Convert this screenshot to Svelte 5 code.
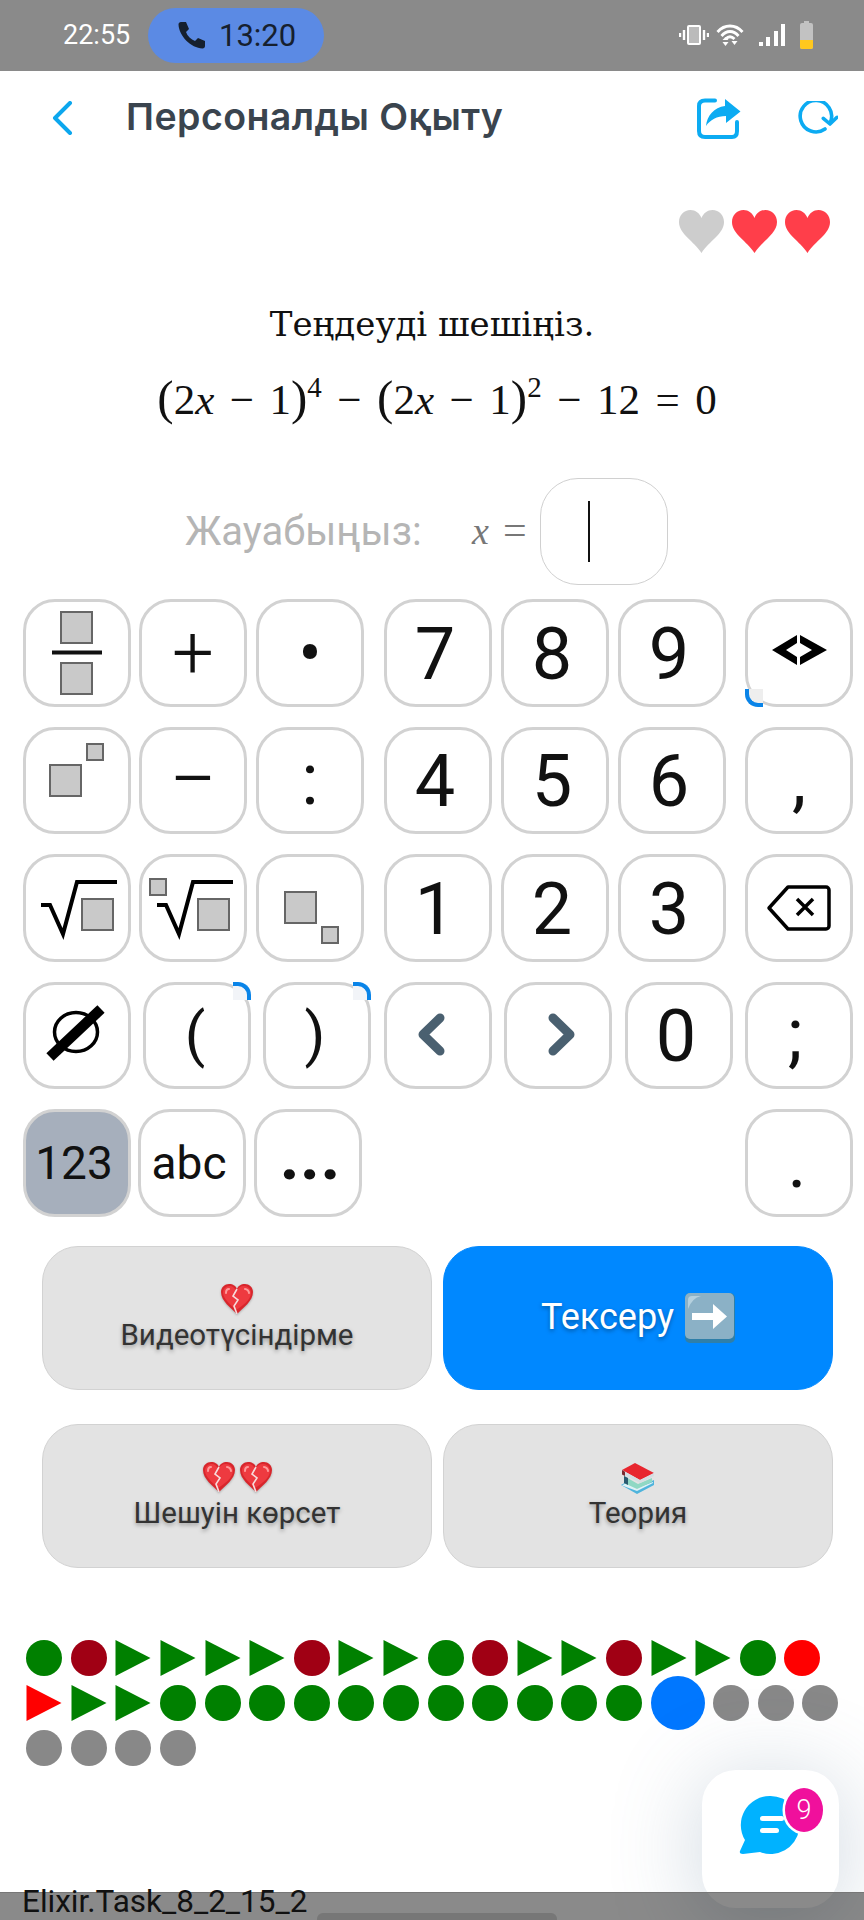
<script>
  const G = '#008000', D = '#a00014', R = '#ff0000', Y = '#888888';
  const prog = [
    ['c',G],['c',D],['t',G],['t',G],['t',G],['t',G],['c',D],['t',G],['t',G],['c',G],['c',D],['t',G],['t',G],['c',D],['t',G],['t',G],['c',G],['c',R],
    ['t',R],['t',G],['t',G],['c',G],['c',G],['c',G],['c',G],['c',G],['c',G],['c',G],['c',G],['c',G],['c',G],['c',G],['b','#0077ff'],['c',Y],['c',Y],['c',Y],
    ['c',Y],['c',Y],['c',Y],['c',Y]
  ];
  const rows = [
    [{ml:23,i:'frac'},{ml:8,t:'+',c:'op'},{ml:9,t:'•',c:'bul'},{ml:20,t:'7',c:'num'},{ml:9,t:'8',c:'num'},{ml:9,t:'9',c:'num'},{ml:19,i:'code',mark:'bl'}],
    [{ml:23,i:'pow'},{ml:8,t:'−',c:'op minus'},{ml:9,t:':'},{ml:20,t:'4',c:'num'},{ml:9,t:'5',c:'num'},{ml:9,t:'6',c:'num'},{ml:19,t:','}],
    [{ml:23,i:'sqrt'},{ml:8,i:'nroot'},{ml:9,i:'sub'},{ml:20,t:'1',c:'num'},{ml:9,t:'2',c:'num'},{ml:9,t:'3',c:'num'},{ml:19,i:'bksp'}],
    [{ml:23,i:'empty'},{ml:12,t:'(',c:'par',mark:'tr'},{ml:12,t:')',c:'par',mark:'tr'},{ml:13,i:'left'},{ml:12,i:'right'},{ml:13,t:'0',c:'num'},{ml:12,t:';',c:'semi'}],
    [{ml:23,t:'123',c:'mode on'},{ml:7,t:'abc',c:'mode'},{ml:8,t:'...',c:'dots'},{ml:383,t:'.',c:'per'}]
  ];
</script>

{#snippet sq(x, y, s)}
  <rect class="sq" x={x} y={y} width={s} height={s}/>
{/snippet}

{#snippet broken()}
  <svg class="heart" viewBox="0 0 34 30" aria-hidden="true">
    <path d="M17 30C11 24 1 17 1 8 1 3 5 0 9 0c4 0 7 2 8 5 1-3 4-5 8-5 4 0 8 3 8 8 0 9-10 16-16 22Z" fill="#d8262c"/>
    <path d="M16 26C11 21 3 15 3 8.500 3 5 6 2 9.500 2 13 2 15 4 16 7c2-3 4-5 8-5 4 0 7 3 7 7 0 7-9 13-15 17Z" fill="#ee3a40"/>
    <path d="M6 9c0-2 1-4 3-4M25 5c2 0 4 2 4 4" stroke="#ff9a9a" stroke-width="2" stroke-linecap="round" fill="none"/>
    <path d="M17 5l-4 7 5 4-4 6 3 8" stroke="#f6dcdc" stroke-width="1.600" fill="none"/>
  </svg>
{/snippet}

<div class="page">
  <div class="status">
    <span class="time">22:55</span>
    <div class="call">
      <svg class="phone" viewBox="0 0 30 30" aria-hidden="true"><path d="M4 2h5l3 7-3 3c1.500 4 5 7.500 9 9l3-3 7 3v5c0 1.500-1 2.500-2.500 2.500C14 28 2 16 1.500 4.500 1.500 3 2.500 2 4 2Z" fill="#16202e"/></svg>
      <span>13:20</span>
    </div>
    <div class="sysicons">
      <svg width="30" height="20" viewBox="0 0 30 20" aria-hidden="true">
        <rect x="9" y="1" width="12" height="18" rx="1" fill="#bbb" stroke="#fff" stroke-width="2"/>
        <path d="M5 5v10M1 8v4M25 5v10M29 8v4" stroke="#fff" stroke-width="2.400"/>
      </svg>
      <svg width="28" height="23" viewBox="0 0 27 23" aria-hidden="true">
        <path d="M1 8C8 0 19 0 26 8M5 12C10 6 17 6 22 12M9 15c3-3 6-3 9 0" stroke="#fff" stroke-width="2.800" fill="none"/>
        <path d="M6 16l3-3 3 3ZM15 17h6l-3 4ZM6 18h6l-3 4Z" fill="#fff"/>
      </svg>
      <svg class="sig" width="27" height="23" viewBox="0 0 27 23" aria-hidden="true">
        <path d="M0 18h4v4H0ZM7 13h4v9H7ZM15 7h4v15h-4ZM22 0h4v22h-4Z" fill="#fff"/>
      </svg>
      <svg width="15" height="28" viewBox="0 0 15 28" aria-hidden="true">
        <path d="M5 0h5v2h2a2 2 0 0 1 2 2v22a2 2 0 0 1-2 2H3a2 2 0 0 1-2-2V4a2 2 0 0 1 2-2h2Z" fill="#c2c2c2"/>
        <path d="M1 19h13v7a2 2 0 0 1-2 2H3a2 2 0 0 1-2-2Z" fill="#ffc81e"/>
      </svg>
    </div>
  </div>

  <header class="head">
    <svg class="back" width="21" height="34" viewBox="0 0 21 34" aria-hidden="true"><path d="M18 2 3 17l15 15" stroke="#0ca7ee" stroke-width="4" stroke-linecap="round" stroke-linejoin="round" fill="none"/></svg>
    <h1>Персоналды Оқыту</h1>
    <svg class="share" width="44" height="41" viewBox="0 0 44 41" aria-hidden="true">
      <path d="M18 2.500H8Q2 2.500 2 8v25q0 6 6 6h27q5 0 5-6v-9" stroke="#0cabf2" stroke-width="4" stroke-linecap="round" fill="none"/>
      <path d="M28 1 43.500 13.500 29 25v-7C20 18 13 22 9 28c1-10 8-19 19-20Z" fill="#0cabf2"/>
    </svg>
    <svg class="reload" width="40" height="35" viewBox="0 0 40 35" aria-hidden="true">
      <path d="M27 28A15.700 15.700 0 1 1 32.500 21" stroke="#0cabf2" stroke-width="3.600" stroke-linecap="round" fill="none"/>
      <path d="M25.300 17.300 32 23l7-6.700" stroke="#0cabf2" stroke-width="3.600" stroke-linecap="round" stroke-linejoin="round" fill="none"/>
    </svg>
  </header>

  <div class="hearts">
    {#each ['#cdcdcd','#ff3e4a','#ff3e4a'] as col}
      <svg width="45" height="43" viewBox="0 0 45 43" aria-hidden="true"><path d="M22.500 43C15 31 0 24 0 12 0 5 5 0 11.500 0c5 0 9 3 11 8 2-5 6-8 11-8C40 0 45 5 45 12c0 12-15 19-22.500 31Z" fill={col}/></svg>
    {/each}
  </div>

  <p class="q">Теңдеуді шешіңіз.</p>
  <div class="eq"><span class="p">(</span>2<i>x</i><span class="o">−</span>1<span class="p">)</span><sup>4</sup><span class="o">−</span><span class="p">(</span>2<i>x</i><span class="o">−</span>1<span class="p">)</span><sup>2</sup><span class="o">−</span>12<span class="o">=</span>0</div>

  <div class="answer">
    <span class="lab">Жауабыңыз:</span>
    <span class="xeq"><i>x</i><span class="eqs">=</span></span>
    <div class="box"><span class="caret"></span></div>
  </div>

  <div class="pad">
    {#each rows as row}
      <div class="row">
        {#each row as k}
          <button class={'key ' + (k.c || '')} style="margin-left:{k.ml}px">
            {#if k.t}<span>{k.t}</span>{/if}
            {#if k.mark}<em class={'mark ' + k.mark}></em>{/if}
            {#if k.i}
              <svg width="108" height="108" viewBox="0 0 108 108" aria-hidden="true">
                {#if k.i === 'frac'}
                  {@render sq(38,13,31)}{@render sq(38,64,31)}
                  <path d="M29 53.500h50" stroke="#111" stroke-width="4"/>
                {:else if k.i === 'pow'}
                  {@render sq(27,39,31)}{@render sq(64,18,16)}
                {:else if k.i === 'sqrt'}
                  {@render sq(59,45,31)}
                  <path d="M18 51h9l13 29L54 28h40" class="rad"/>
                {:else if k.i === 'nroot'}
                  {@render sq(59,45,31)}{@render sq(11,25,16)}
                  <path d="M18 51h9l13 29L54 28h40" class="rad"/>
                {:else if k.i === 'sub'}
                  {@render sq(29,38,31)}{@render sq(66,73,16)}
                {:else if k.i === 'empty'}
                  <ellipse cx="53" cy="51" rx="21.500" ry="19.500" fill="none" stroke="#000" stroke-width="3.500"/>
                  <path d="M27 76 78 28" stroke="#000" stroke-width="10.500"/>
                {:else if k.i === 'left'}
                  <path d="M56 37 39 53.500 56 70" class="chev"/>
                {:else if k.i === 'right'}
                  <path d="M49 37 66 53.500 49 70" class="chev"/>
                {:else if k.i === 'code'}
                  <path d="M27 51 52 36v8L41 51l11 7v8ZM55 36l27 15-27 15v-8l12-7-12-7Z" fill="#000"/>
                {:else if k.i === 'bksp'}
                  <path d="M43 33h38a3 3 0 0 1 3 3v36a3 3 0 0 1-3 3H43L24 54Z" fill="none" stroke="#000" stroke-width="3.500" stroke-linejoin="round"/>
                  <path d="M52 45 68 61M68 45 52 61" stroke="#000" stroke-width="3.500"/>
                {/if}
              </svg>
            {/if}
          </button>
        {/each}
      </div>
    {/each}
  </div>

  <div class="actions">
    <button class="act">
      <span class="emo">{@render broken()}</span>
      <span>Видеотүсіндірме</span>
    </button>
    <button class="act go">
      <span>Тексеру</span>
      <svg width="50" height="50" viewBox="0 0 50 50" aria-hidden="true">
        <rect width="50" height="50" rx="5" fill="#2f7fa8"/>
        <rect width="49" height="46" rx="5" fill="#8bb1c6"/>
        <path d="M3 16V7q0-4 4-4h9Q7 5 3 16Z" fill="#b5d0de"/>
        <path d="M7 20h21v-9l14 12.500L28 36v-9H7Z" fill="#fff"/>
      </svg>
    </button>
    <button class="act">
      <span class="emo">{@render broken()}{@render broken()}</span>
      <span>Шешуін көрсет</span>
    </button>
    <button class="act">
      <span class="emo">
        <svg class="books" width="34" height="32" viewBox="0 0 34 32" aria-hidden="true">
          <path d="M0 23 7 19l10 6 16-7v5L16 32Z" fill="#4fb4dc"/>
          <path d="M1 23.500 16 29l16-8v-1L16 26 5 21Z" fill="#dff1f6"/>
          <path d="M3 14l14 8 14-6v4l-15 7-13-6Z" fill="#8fd8c4"/>
          <path d="M3 14v7l4 2V16Z" fill="#2a5a70"/>
          <path d="M1 8 14 1l19 10-14 7Z" fill="#e8262f"/>
          <path d="M1 8l18 10 14-7v3l-14 7-16-8Z" fill="#d5dde2"/>
          <path d="M1 8v4.500l3 1.500V9.700Z" fill="#7a2a30"/>
        </svg>
      </span>
      <span>Теория</span>
    </button>
  </div>

  <div class="progress">
    {#each prog as [kind, col]}
      {#if kind === 't'}
        <svg class="item" width="35" height="36" viewBox="0 0 35 36" aria-hidden="true"><path d="M0 0 35 18 0 36Z" fill={col}/></svg>
      {:else}
        <span class={kind === 'b' ? 'item dot cur' : 'item dot'} style="background:{col}"></span>
      {/if}
    {/each}
  </div>

  <div class="task">Elixir.Task_8_2_15_2</div>

  <div class="chat">
    <svg width="137" height="137" viewBox="0 0 137 137" aria-hidden="true">
      <path d="M68 26A29 29 0 1 1 58 82L41 84Q37 84 38 81L43 70A29 29 0 0 1 68 26Z" fill="#00b2ff"/>
      <rect x="58" y="46" width="24" height="5" rx="2.500" fill="#fff"/>
      <rect x="58" y="58" width="19" height="5" rx="2.500" fill="#fff"/>
    </svg>
    <span class="badge">9</span>
  </div>

  <div class="navbar"><span class="handle"></span></div>
</div>

<style>
  :global(body) { margin: 0; background: #fff; }
  .page {
    position: relative;
    width: 864px;
    height: 1920px;
    overflow: hidden;
    background: #fff;
    font-family: Roboto, "Noto Sans", sans-serif;
    color: #111;
  }
  .status {
    height: 71px;
    box-sizing: border-box;
    background: #8a8a8a;
    display: flex;
    align-items: center;
    padding: 0 0 1px 63px;
  }
  .time { color: #fff; font-size: 27px; width: 85px; }
  .call {
    width: 176px;
    height: 55px;
    border-radius: 28px;
    background: #5b8ae4;
    display: flex;
    align-items: center;
    padding-left: 29px;
    box-sizing: border-box;
    gap: 12px;
    color: #16202e;
    font-size: 31px;
  }
  .phone { width: 30px; height: 30px; }
  .sysicons { margin-left: auto; margin-right: 50px; display: flex; align-items: center; gap: 7px; }
  .sig { margin-left: 8px; margin-right: 6px; }

  .head { height: 80px; padding: 7px 26px 0 52px; display: flex; align-items: center; }
  .head h1 {
    margin: 0 0 2px 53px;
    font: 600 37.500px/1 Inter, "Noto Sans", sans-serif;
    color: #3a444e;
    letter-spacing: 0.45px;
    flex: 1;
  }
  .share { margin-right: 57px; }

  .hearts { display: flex; justify-content: flex-end; gap: 8px; padding-right: 34px; margin-top: 52px; }

  .q { margin: 50px 0 0; text-align: center; font: 34px/43px "DejaVu Serif", serif; color: #111; }
  .eq {
    margin-top: 28px;
    padding-left: 10px;
    text-align: center;
    font: 43px/1.2 "Liberation Serif", serif;
    color: #111;
  }
  .eq .p { font-size: 49px; line-height: 0; font-weight: 400; }
  .eq sup { font-size: 29px; line-height: 0; vertical-align: 17px; }
  .eq .o { margin: 0 15.500px; }

  .answer { display: flex; align-items: center; margin-top: 52px; padding-left: 185px; height: 107px; }
  .lab { font-size: 40px; color: #b5b5b5; width: 287px; }
  .xeq { font: 38px "Liberation Serif", serif; color: #777; width: 68px; display: flex; }
  .eqs { margin-left: 14px; font-size: 42px; line-height: 1; }
  .box {
    width: 128px;
    height: 107px;
    box-sizing: border-box;
    border: 1.500px solid #d0d0d0;
    border-radius: 38px;
    display: flex;
    align-items: center;
    justify-content: center;
  }
  .caret { width: 2px; height: 61px; background: #111; margin-right: 30px; }

  .pad { position: absolute; left: 0; top: 599px; display: flex; flex-direction: column; gap: 20px; }
  .row { display: flex; height: 107.500px; }
  .key {
    position: relative;
    width: 108px;
    height: 107.500px;
    box-sizing: border-box;
    border: 3px solid #d2d2d2;
    border-radius: 32px;
    background: #fff;
    padding: 0;
    display: flex;
    align-items: center;
    justify-content: center;
    font: 72px/1 Roboto, sans-serif;
    color: #111;
  }
  .key svg { flex: none; margin: -3px; }
  .num span { transform: translate(-3px, 2px); }
  .semi span { transform: translateX(-4px); }
  .per span { transform: translateX(-2px); }
  .op { font-size: 74px; font-weight: 300; }
  .minus { font-size: 84px; }
  .bul { font-size: 70px; }
  .par { font-size: 60px; }
  .par span { transform: translateX(-2px); }
  .mode { font-size: 46px; }
  .mode span { transform: translateX(-3px); }
  .on { background: #a6afbc; }
  .dots { font-size: 70px; font-weight: 700; }
  .dots span { transform: translate(2px, -8px); }
  .mark { position: absolute; width: 14px; height: 14px; border: 0 solid #0a84e8; }
  .mark.tr { top: -3px; right: -3px; border-width: 4px 4px 0 0; border-top-right-radius: 13px; background: #f2f4f8; }
  .mark.bl { bottom: -3px; left: -3px; border-width: 0 0 4px 4px; border-bottom-left-radius: 13px; background: #eee; }
  .sq { fill: #c9c9c9; stroke: #666; stroke-width: 2; }
  .rad { fill: none; stroke: #000; stroke-width: 4; }
  .chev { fill: none; stroke: #4a6070; stroke-width: 9; stroke-linecap: round; stroke-linejoin: round; }

  .actions {
    position: absolute;
    left: 42px;
    top: 1246px;
    width: 791px;
    display: grid;
    grid-template-columns: 390px 390px;
    grid-auto-rows: 144px;
    column-gap: 11px;
    row-gap: 34px;
  }
  .act {
    border: 1px solid #d2d2d2;
    border-radius: 36px;
    background: #e3e3e3;
    display: flex;
    flex-direction: column;
    align-items: center;
    justify-content: center;
    padding: 0;
    font: 29.500px/1.2 Roboto, sans-serif;
    color: #333;
    text-shadow: 0 2px 4px rgba(0,0,0,.35);
  }
  .go {
    flex-direction: row;
    gap: 11px;
    background: #0088ff;
    border-color: #0088ff;
    color: #fff;
    font-size: 36px;
  }
  .emo { display: flex; gap: 3px; height: 32px; padding-top: 2px; margin-bottom: 2px; }
  .heart { width: 34px; height: 30px; filter: drop-shadow(0 1px 1px rgba(0,0,0,.25)); }

  .progress { position: absolute; left: 22px; right: 0; top: 1636px; display: flex; flex-wrap: wrap; }
  .item { margin: 4.300px; flex: none; width: 36px; height: 36px; }
  .dot { display: block; border-radius: 50%; }
  .cur { width: 54px; height: 54px; margin: -4.700px 4.300px; }

  .task { position: absolute; left: 22px; top: 1884px; font-size: 31.500px; line-height: 36px; color: #111; z-index: 3; }

  .chat {
    position: absolute;
    left: 702px;
    top: 1770px;
    width: 137px;
    height: 138px;
    border-radius: 34px;
    background: #fff;
    box-shadow: 0 10px 90px rgba(90,120,150,.3);
  }
  .chat svg { display: block; }
  .badge {
    position: absolute;
    left: 83px;
    top: 18px;
    width: 38px;
    height: 44px;
    border-radius: 50%;
    background: #f0109c;
    box-shadow: 0 0 0 2.500px #fff;
    color: #fff;
    font-size: 27px;
    font-weight: 300;
    display: flex;
    align-items: center;
    justify-content: center;
  }

  .navbar {
    position: absolute;
    left: 0;
    right: 0;
    top: 1892px;
    height: 28px;
    background: rgba(0,0,0,.46);
    z-index: 2;
    border-top: 1px solid #777;
    box-sizing: border-box;
  }
  .handle { position: absolute; left: 317px; width: 240px; top: 20px; height: 8px; border-radius: 6px 6px 0 0; background: #777; }
</style>
